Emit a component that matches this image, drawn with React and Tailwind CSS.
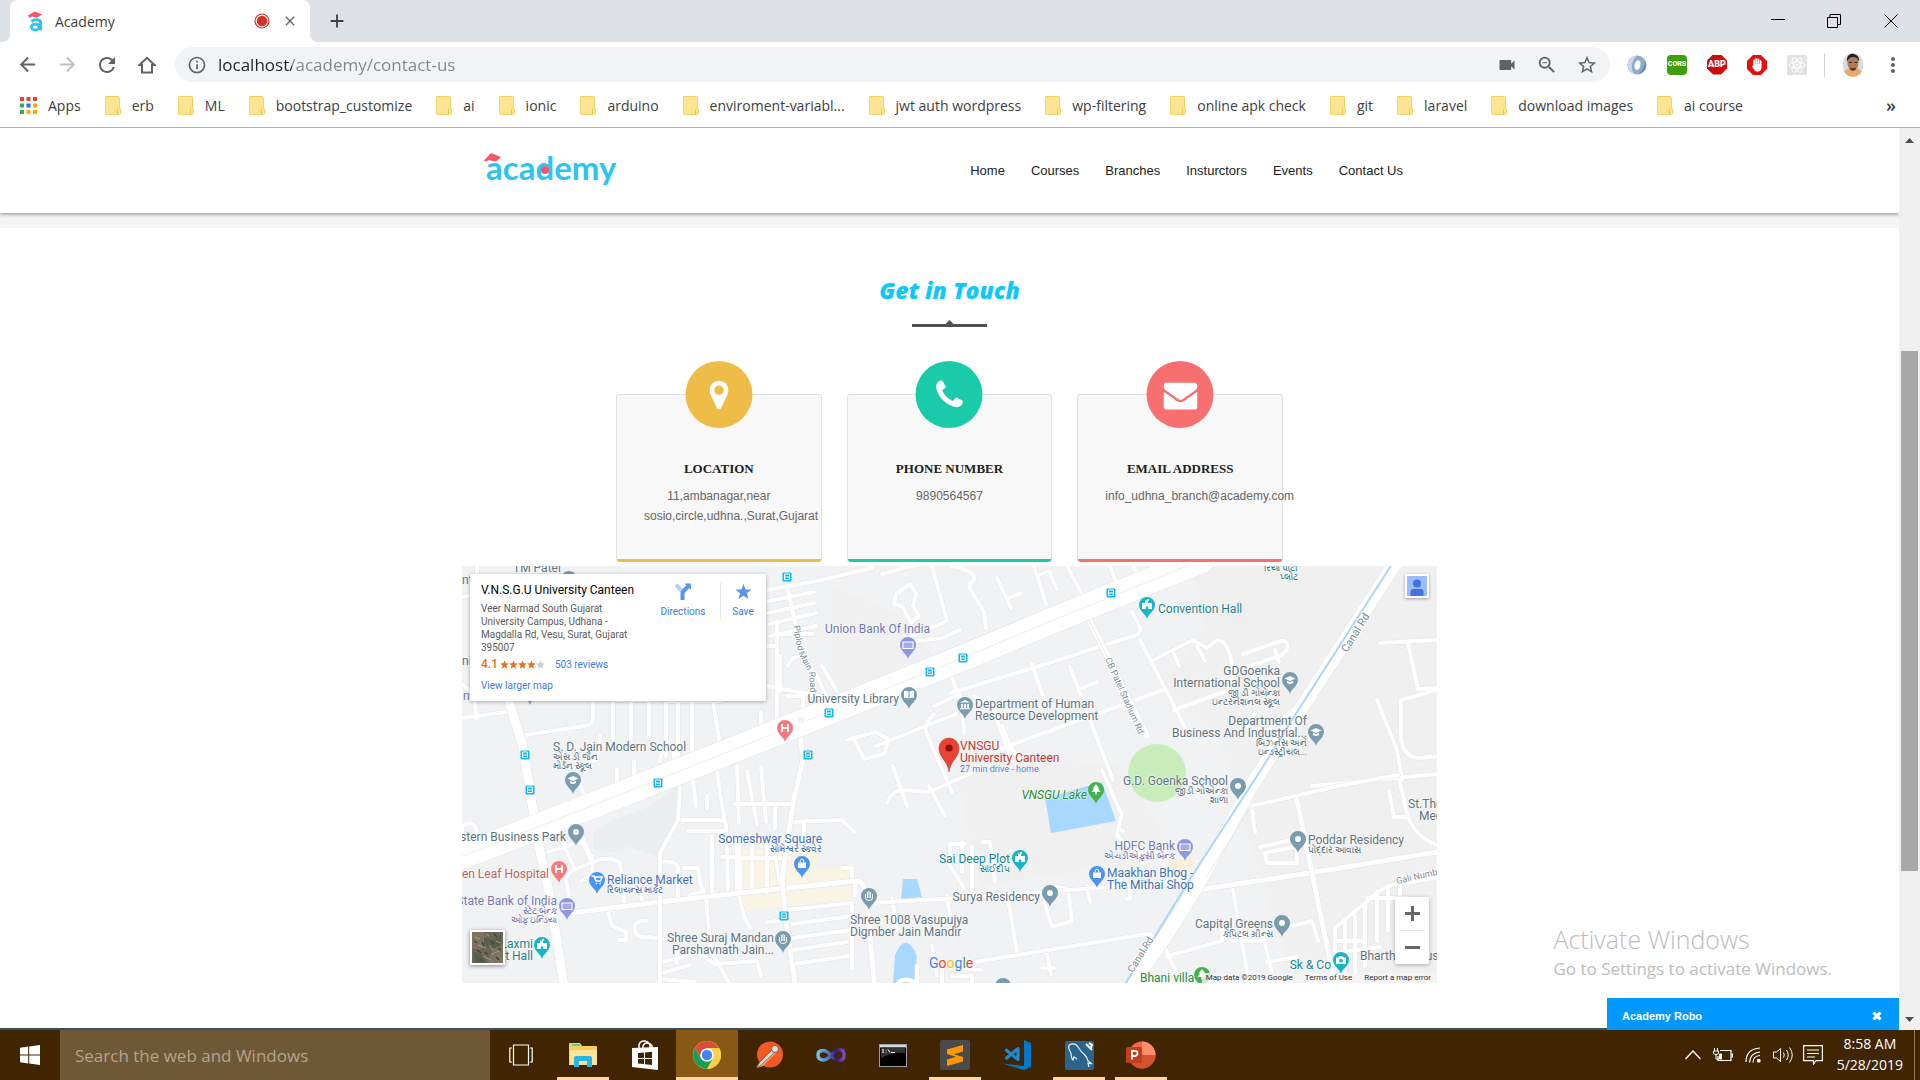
import React from "react";
import { MdArrowBack, MdArrowForward, MdRefresh, MdVideocam, MdOutlineZoomOut, MdStarBorder, MdMoreVert, MdInfoOutline, MdClose, MdAdd } from "react-icons/md";

const bookmarks = [
  "erb", "ML", "bootstrap_customize", "ai", "ionic", "arduino", "enviroment-variabl...",
  "jwt auth wordpress", "wp-filtering", "online apk check", "git", "laravel",
  "download images", "ai course",
];

const navLinks = ["Home", "Courses", "Branches", "Insturctors", "Events", "Contact Us"];

function Folder() {
  return (
    <svg width="16" height="19" viewBox="0 0 16 19" aria-hidden="true">
      <path d="M1 .5h12.5a1 1 0 0 1 1 1V12l1 1v4.5l-1 .9H1.2a.8.8 0 0 1-.8-.8V1.3A.8.8 0 0 1 1 .5z" fill="#ffe591" stroke="#f3d064" />
      <path d="M12.5 18.3v-4.6l1-1.6" fill="none" stroke="#f0c33c" />
    </svg>
  );
}

function Favicon() {
  return (
    <svg width="17" height="21" viewBox="0 0 17 21" aria-hidden="true">
      <path d="M0 4.5 6.5.5 14.5 3.5 9 6.5 4 5.6 1.5 7z" fill="#f4566a" />
      <path d="M3.4 10.6C6 8.3 12.6 7.6 12.6 12v7.2" fill="none" stroke="#2fc4ef" strokeWidth="3" />
      <ellipse cx="7.3" cy="16" rx="4" ry="2.9" fill="none" stroke="#2fc4ef" strokeWidth="2.8" />
    </svg>
  );
}

function Browser() {
  return (
    <header className="shrink-0 font-['Open_Sans',sans-serif]">
      <div className="flex h-[42px] items-center bg-[#dee1e6] pl-[10px] text-[#3c4043]">
        <div className="relative flex h-full w-[300px] items-center rounded-t-lg bg-white pl-[18px] pr-3">
          <span className="absolute bottom-0 -left-2 h-2 w-2 bg-[radial-gradient(circle_at_0_0,transparent_8px,#fff_8px)]" />
          <span className="absolute bottom-0 -right-2 h-2 w-2 bg-[radial-gradient(circle_at_100%_0,transparent_8px,#fff_8px)]" />
          <Favicon />
          <span className="ml-[10px] flex-1 text-[14px]">Academy</span>
          <svg width="16" height="16" viewBox="0 0 16 16" aria-hidden="true">
            <circle cx="8" cy="8" r="7" fill="none" stroke="#d93025" strokeWidth="1.2" />
            <circle cx="8" cy="8" r="5.2" fill="#d93025" />
          </svg>
          <button aria-label="Close tab" className="ml-3"><MdClose size={16} color="#5f6368" /></button>
        </div>
        <button aria-label="New tab" className="ml-4"><MdAdd size={22} color="#3c4043" /></button>
        <div className="ml-auto flex h-full items-center text-black">
          <button aria-label="Minimize" className="flex w-14 justify-center"><svg width="14" height="14"><path d="M0 5.5h14" stroke="currentColor" /></svg></button>
          <button aria-label="Restore" className="flex w-14 justify-center"><svg width="14" height="14" fill="none" stroke="currentColor"><path d="M.5 3.5h10v10H.5zM3 3.5V.5h10.500v10H10.500" /></svg></button>
          <button aria-label="Close window" className="flex w-[58px] justify-center"><svg width="14" height="14"><path d="M.5.5l13 13m0-13-13 13" stroke="currentColor" /></svg></button>
        </div>
      </div>

      <div className="flex h-[45px] items-center bg-white pl-[7px] pr-[7px] text-[#5f6368]">
        <button aria-label="Back" className="flex w-10 justify-center"><MdArrowBack size={23} /></button>
        <button aria-label="Forward" className="flex w-10 justify-center text-[#bdc0c4]"><MdArrowForward size={23} /></button>
        <button aria-label="Reload" className="flex w-10 justify-center"><MdRefresh size={24} /></button>
        <button aria-label="Home page" className="flex w-10 justify-center">
          <svg width="18" height="18" viewBox="0 0 18 18" fill="none" stroke="currentColor" strokeWidth="2"><path d="M1.500 9 9 1.800 16.500 9H14v7.500H4V9z" /></svg>
        </button>
        <div className="ml-2 flex h-[35px] flex-1 items-center rounded-full bg-[#f1f3f4] pl-3">
          <MdInfoOutline size={20} />
          <input
            aria-label="Address"
            readOnly
            value="localhost/academy/contact-us"
            className="ml-[11px] min-w-0 flex-1 bg-[linear-gradient(to_right,#202124_74px,#80868b_74px)] bg-clip-text text-[17px] text-transparent outline-none"
          />
          <button aria-label="Camera" className="flex w-10 justify-center"><MdVideocam size={20} /></button>
          <button aria-label="Zoom" className="flex w-10 justify-center"><MdOutlineZoomOut size={22} /></button>
          <button aria-label="Bookmark" className="mr-[3px] flex w-10 justify-center"><MdStarBorder size={22} /></button>
        </div>
        <button aria-label="Sphere extension" className="ml-[7px] flex w-10 justify-center">
          <svg width="20" height="20" viewBox="0 0 20 20">
            <circle cx="10" cy="10" r="9.500" fill="#8fabcb" />
            <path d="M10 .5a9.500 9.500 0 0 0-2 18.700C3 15 4 6 10 .5z" fill="#c9d8e8" />
            <path d="M12 19a9.500 9.500 0 0 0 6-13c0 5-2 9-6 13z" fill="#5c7fa8" />
            <ellipse cx="10.500" cy="10" rx="3" ry="5" fill="#fff" transform="rotate(12 10 10)" />
          </svg>
        </button>
        <button aria-label="CORS" className="flex w-10 justify-center">
          <span className="flex h-5 w-5 items-center justify-center rounded-sm bg-[#3f9f08] font-['Roboto'] text-[7px] font-black text-white">CORS</span>
        </button>
        <button aria-label="Adblock Plus" className="flex w-10 justify-center">
          <span className="flex h-5 w-5 items-center justify-center bg-[#d00a0a] font-['Roboto'] text-[9px] font-black text-white [clip-path:polygon(30%_0,70%_0,100%_30%,100%_70%,70%_100%,30%_100%,0_70%,0_30%)]">ABP</span>
        </button>
        <button aria-label="AdBlock" className="flex w-10 justify-center">
          <svg width="20" height="20" viewBox="0 0 20 20">
            <path d="M6 0h8l6 6v8l-6 6H6l-6-6V6z" fill="#ee0b0b" />
            <path d="M7 10V5.500M9.200 9.500V4M11.400 9.500V4.300M13.600 10V6" stroke="#fff" strokeWidth="1.800" strokeLinecap="round" />
            <path d="M6.200 9h8.300v3.500c0 2-1.200 4-3.200 4h-1.500C8 16.500 7 14.500 5 11.500c.2-1 1-.8 1.500 0z" fill="#fff" />
          </svg>
        </button>
        <button aria-label="React tools" className="flex w-10 justify-center">
          <svg width="20" height="20" viewBox="0 0 20 20">
            <rect width="20" height="20" rx="1" fill="#e2e2e2" />
            <g fill="none" stroke="#fff" strokeWidth="1">
              <ellipse cx="10" cy="10" rx="8" ry="3.200" />
              <ellipse cx="10" cy="10" rx="8" ry="3.200" transform="rotate(60 10 10)" />
              <ellipse cx="10" cy="10" rx="8" ry="3.200" transform="rotate(120 10 10)" />
            </g>
            <circle cx="10" cy="10" r="1.500" fill="#fff" />
          </svg>
        </button>
        <span className="ml-[7px] mr-4 h-6 w-px bg-[#cfd1d4]" />
        <button aria-label="Profile" className="flex w-6 justify-center">
          <svg width="20" height="24" viewBox="0 0 20 24">
            <clipPath id="face"><rect width="20" height="24" rx="10" /></clipPath>
            <g clipPath="url(#face)">
              <rect width="20" height="24" fill="#d7dcde" />
              <path d="M0 24c0-7 4-9 10-9s10 3 10 9z" fill="#e9a96a" />
              <ellipse cx="10" cy="10" rx="5.500" ry="7.500" fill="#b07a5d" />
              <path d="M4 9C3 2 8 0 11 1s6 3 5 8c-1-4-3-5-6-5S5 6 4 9z" fill="#262021" />
              <path d="M6 9.500h3m2.500 0h3" stroke="#3a2520" />
              <path d="M7 14.500q3 1 6 0l-.5 2.500q-2.500 1.500-5 0z" fill="#5a382c" />
            </g>
          </svg>
        </button>
        <button aria-label="Menu" className="ml-2 flex w-10 justify-center"><MdMoreVert size={24} /></button>
      </div>

      <nav aria-label="Bookmarks" className="flex h-[41px] items-center justify-between border-b border-[#b0b1b3] bg-white pb-1 pl-5 pr-6 text-[14px] text-[#3c4043]">
        <ul className="flex items-center gap-6 whitespace-nowrap">
          <li>
            <a href="#apps" className="flex items-center gap-[11px]">
              <svg width="17" height="17" viewBox="0 0 17 17" aria-hidden="true">
                {["#e94235", "#e94235", "#e94235", "#34a853", "#1a73e8", "#f9ab00", "#34a853", "#f9ab00", "#f9ab00"].map((c, i) => (
                  <rect key={i} x={(i % 3) * 6.5} y={Math.floor(i / 3) * 6.5} width="4" height="4" fill={c} />
                ))}
              </svg>
              Apps
            </a>
          </li>
          {bookmarks.map((b) => (
            <li key={b}>
              <a href="#bookmark" className="flex items-center gap-[11px]"><Folder />{b}</a>
            </li>
          ))}
        </ul>
        <button aria-label="More bookmarks" className="text-[18px] font-semibold">»</button>
      </nav>
    </header>
  );
}

function SiteHeader() {
  return (
    <header className="relative z-10 flex h-[85px] items-center bg-white shadow-[0_1px_4px_rgba(0,0,0,0.45)]">
      <div className="mx-auto flex w-full max-w-[931px] items-center justify-between pr-[12px]">
        <a href="#home" aria-label="academy" className="relative pb-2 pl-[2px] font-['Lato',sans-serif] text-[33px] font-bold leading-[40px] text-[#2fc4ef]">
          academy
          <svg className="absolute left-0 top-0 h-[38px] w-[134px]" viewBox="0 0 134 38" aria-hidden="true">
            <path d="M0 13.500 7 6l10 4-5 4.500-7-1.200L1 14.500z" fill="#f4566a" />
            <circle cx="61" cy="23" r="4" fill="#f4566a" />
          </svg>
        </a>
        <nav aria-label="Site" className="font-['Liberation_Sans',sans-serif] text-[13px] text-[#222]">
          <ul className="flex gap-[26px]">
            {navLinks.map((n) => <li key={n}><a href="#nav">{n}</a></li>)}
          </ul>
        </nav>
      </div>
    </header>
  );
}

const contactCards = [
  {
    title: "LOCATION", text: "11,ambanagar,near sosio,circle,udhna.,Surat,Gujarat",
    circle: "bg-[#eebd48]", edge: "bg-[#eebd48]", box: "0 0 1024 1792", w: 19,
    d: "M768 640q0-106-75-181t-181-75-181 75-75 181 75 181 181 75 181-75 75-181zm256 0q0 109-33 179l-364 774q-16 33-47.5 52t-67.5 19-67.5-19-46.5-52l-365-774q-33-70-33-179 0-212 150-362t362-150 362 150 150 362z",
  },
  {
    title: "PHONE NUMBER", text: "9890564567",
    circle: "bg-[#1acbaa]", edge: "bg-[#1acbaa]", box: "0 0 1792 1792", w: 34,
    d: "M1600 1240q0 27-10 70.5t-21 68.5q-21 50-122 106-94 51-186 51-27 0-52.5-3.5t-57.5-12.5-47.5-14.5-55.5-20.5-49-18q-98-35-175-83-128-79-264.5-215.5t-215.5-264.5q-48-77-83-175-3-9-18-49t-20.5-55.5-14.5-47.5-12.5-57.5-3.5-52.5q0-92 51-186 56-101 106-122 25-11 68.500-21t70.500-10q14 0 21 3 18 6 53 76 11 19 30 54t35 63.500 31 53.500q3 4 17.500 25t21.500 35.500 7 28.500q0 20-28.500 50t-62 55-62 53-28.500 46q0 9 5 22.500t8.500 20.500 14 24 11.500 19q76 137 174 235t235 174q2 1 19 11.500t24 14 20.500 8.500 22.500 5q18 0 46-28.500t53-62 55-62 50-28.500q14 0 28.500 7t35.500 21.500 25 17.500q25 15 53.500 31t63.500 35 54 30q70 35 76 53 3 7 3 21z",
  },
  {
    title: "EMAIL ADDRESS", text: "info_udhna_branch@academy.com",
    circle: "bg-[#f7706f]", edge: "bg-[#f7706f]", box: "0 0 1792 1792", w: 34,
    d: "M1792 710v794q0 66-47 113t-113 47h-1472q-66 0-113-47t-47-113v-794q44 49 101 87 362 246 497 345 57 42 92.500 65.500t94.500 48 110 24.500h2q51 0 110-24.500t94.500-48 92.500-65.500q170-123 498-345 57-39 100-87zm0-294q0 79-49 151t-122 123q-376 261-468 325-10 7-42.500 31t-54 38.500-52 32.500-57.500 27-50 9h-2q-23 0-50-9t-57.500-27-52-32.500-54-38.500-42.500-31q-91-64-262-182.500t-205-142.500q-62-42-117-115.500t-55-136.500q0-78 41.500-130t118.500-52h1472q65 0 112.500 47t47.500 113z",
  },
];

function ContactCard({ card }) {
  return (
    <article className="relative min-h-[168px] overflow-visible rounded-[3px] border border-b-0 border-[#e0e1e2] bg-[#f8f8f8] px-[27px] pt-16 text-center">
      <span className={`absolute -top-[34px] left-1/2 flex h-[67px] w-[67px] -translate-x-1/2 items-center justify-center rounded-full ${card.circle}`}>
        <svg width={card.w} height="34" viewBox={card.box} fill="#fff" aria-hidden="true"><path d={card.d} /></svg>
      </span>
      <h3 className="font-['Liberation_Serif',serif] text-[13px] font-bold leading-5 text-[#222]">{card.title}</h3>
      <p className="mt-[7px] font-['Liberation_Sans',sans-serif] text-[12px] leading-5 text-[#666]">{card.text}</p>
      <span className={`absolute inset-x-0 bottom-0 h-[3px] rounded-b-[3px] ${card.edge}`} />
    </article>
  );
}

const gray = "text-[#5c7481]";
const teal = "text-[#16848e]";
const blue = "text-[#3f6fba]";
const purple = "text-[#7177b4]";

// x is the left edge, or the right edge when right is set; y is the middle of the first line.
const labels = [
  { x: 51, y: 2, c: gray, t: ["TM Patel"] },
  { x: 0, y: 14, c: gray, t: ["nt"] },
  { x: 0, y: 95, c: gray, t: ["ni"] },
  { x: 1, y: 130, c: purple, t: ["n"] },
  { x: 80, y: 132, c: gray, t: [], g: ["Pipl"] },
  { x: 363, y: 63, c: purple, t: ["Union Bank Of India"] },
  { x: 437, y: 133, right: 1, c: gray, t: ["University Library"] },
  { x: 91, y: 181, c: gray, t: ["S. D. Jain Modern School"], g: ["એસ ડી જૈન", "મોર્ડન સ્કૂલ"] },
  { x: 104, y: 271, right: 1, c: gray, t: ["stern Business Park"] },
  { x: 87, y: 308, right: 1, c: "text-[#bd6164]", t: ["en Leaf Hospital"] },
  { x: 145, y: 314, c: blue, t: ["Reliance Market"], g: ["રિલાયન્સ માર્કેટ"] },
  { x: 95, y: 335, right: 1, c: purple, t: ["State Bank of India"], g: ["સ્ટેટ બેન્ક", "ઓફ ઇન્ડિયા"] },
  { x: 71, y: 378, right: 1, c: teal, t: ["Laxmi", "Event Hall"] },
  { x: 360, y: 273, right: 1, c: blue, t: ["Someshwar Square"], g: ["સોમેશ્વર સ્ક્વેર"] },
  { x: 312, y: 372, right: 1, c: gray, t: ["Shree Suraj Mandan", "Parshavnath Jain..."] },
  { x: 388, y: 354, c: gray, t: ["Shree 1008 Vasupujya", "Digmber Jain Mandir"] },
  { x: 548, y: 293, right: 1, c: teal, t: ["Sai Deep Plot"], g: ["સાંઈદીપ"] },
  { x: 578, y: 331, right: 1, c: gray, t: ["Surya Residency"] },
  { x: 513, y: 138, c: gray, t: ["Department of Human", "Resource Development"] },
  { x: 625, y: 229, right: 1, c: "text-[#2a8a35] italic", t: ["VNSGU Lake"] },
  { x: 696, y: 43, c: teal, t: ["Convention Hall"] },
  { x: 836, y: 4, right: 1, c: teal, t: [], g: ["રિયા પાર્ટી", "પ્લોટ"] },
  { x: 818, y: 105, right: 1, c: gray, t: ["GDGoenka", "International School"], g: ["જી ડી ગોયેન્કા", "ઇન્ટરનેશનલ સ્કૂલ"] },
  { x: 845, y: 155, right: 1, c: gray, t: ["Department Of", "Business And Industrial..."], g: ["બિઝનેસ અને", "ઇન્ડસ્ટ્રીયલ..."] },
  { x: 766, y: 215, right: 1, c: gray, t: ["G.D. Goenka School"], g: ["જીડી ગોએન્કા", "શાળા"] },
  { x: 713, y: 280, right: 1, c: purple, t: ["HDFC Bank"], g: ["એચડીએફસી બેન્ક"] },
  { x: 645, y: 307, c: blue, t: ["Maakhan Bhog -", "The Mithai Shop"] },
  { x: 846, y: 274, c: gray, t: ["Poddar Residency"], g: ["પોદ્દાર આવાસ"] },
  { x: 811, y: 358, right: 1, c: gray, t: ["Capital Greens"], g: ["કેપિટલ ગ્રીન્સ"] },
  { x: 869, y: 399, right: 1, c: teal, t: ["Sk & Co"] },
  { x: 678, y: 412, c: "text-[#2a8a35]", t: ["Bhani villa"] },
  { x: 898, y: 390, c: gray, t: ["Bharthana Bus"] },
  { x: 946, y: 238, c: gray, t: ["St.Tho"] },
  { x: 957, y: 250, c: gray, t: ["Med"] },
];

const slate = "#7a9cb0";
const cyan = "#17b5c8";
const azure = "#4a94f5";
const violet = "#8f97e2";
const coral = "#f6797d";
const leaf = "#47b04c";

// x and y give the tip of the pin.
const pins = [
  [446, 93, violet, "card"], [447, 143, slate, "book"], [111, 228, slate, "cap"], [323, 176, coral, "h"],
  [97, 317, coral, "h"], [114, 280, slate, "dot"], [135, 328, azure, "cart"], [105, 354, violet, "card"],
  [80, 393, cyan, "hall"], [340, 312, azure, "bag"], [321, 387, slate, "hand"], [407, 344, slate, "hand"],
  [558, 306, cyan, "hall"], [588, 341, slate, "dot"], [503, 153, slate, "bank"], [634, 238, leaf, "tree"],
  [685, 53, cyan, "hall"], [828, 128, slate, "cap"], [854, 180, slate, "cap"], [776, 234, slate, "dot"],
  [723, 295, violet, "card"], [635, 322, azure, "bag"], [836, 287, slate, "dot"], [820, 371, slate, "dot"],
  [879, 408, cyan, "camera"], [740, 423, leaf, "tree"], [107, 27, slate, "dot"], [68, 139, violet, "card"],
  [541, 434, slate, "dot"],
];

const glyphs = {
  dot: <circle r="3" fill="#fff" />,
  cap: <path d="M-5.500-1.500 0-4 5.500-1.500 0 1zM-3 .8V3Q0 5 3 3V.8L0 2.200z" fill="#fff" />,
  cart: <path d="M-5-4h2l2 5h4.500l1.500-4H-2M-.500 3.500h.1M3 3.500h.1" fill="none" stroke="#fff" strokeWidth="1.600" strokeLinecap="round" />,
  card: <path d="M-5-3H5v6.500H-5z" fill="#fff" fillOpacity=".2" stroke="#fff" strokeWidth="1.100" />,
  book: <path d="M-5-4q3-.5 4.500.5v7q-2-1-4.500-.5zM5-4Q2-4.500.5-3.500v7q2-1 4.500-.5z" fill="#fff" />,
  h: <path d="M-3-4v8M3-4v8M-3 0h6" stroke="#fff" strokeWidth="1.800" fill="none" />,
  bag: <><path d="M-4-1.500h8V4h-8z" fill="#fff" /><path d="M-2-1.500q0-3.500 2-3.500t2 3.500" fill="none" stroke="#fff" /></>,
  bank: <path d="M-5-2.500 0-5l5 2.500zM-4-1h1.800v4H-4zM-1-1H1v4h-2zM2.200-1H4v4H2.200zM-5 3.300H5v1H-5z" fill="#fff" />,
  hall: <path d="M-5 4v-6h3v-2.500H0V-6h2v2H1v2h4v6H1.200V1.500h-2.400V4z" fill="#fff" />,
  hand: <path d="M-3.500-2v4Q-3.500 4.500 0 4.500T3.500 2v-4M-1.500 2v-6M0 2v-7M1.500 2v-6" fill="none" stroke="#fff" strokeWidth="1" />,
  tree: <path d="M0-6 3-2H2l2.500 4H.7v2.500H-.7V2h-3.800L-2-2h-1z" fill="#fff" />,
  camera: <><path d="M-5-2.500h2.500L-1.500-4h3l1 1.500H5V4H-5z" fill="#fff" /><circle cy=".6" r="1.900" fill={cyan} /></>,
};

const busStops = [[325, 11], [468, 106], [367, 147], [346, 189], [63, 189], [68, 224], [196, 217], [322, 350], [649, 27], [501, 92]];

const lanes = [
  "M0 31 40 24M15 0v30M0 152 51 145M63 169l60-9q8-1 8-6v-24M0 118l12 10 2 24",
  "M151 120v53M169 120v52M187 120v52M150 134h46M204 135h55M216 135v62M230 135v55M251 135l8 50M204 120v70M299 146v16M315 55v97M300 119l62 12M325 130h16v20",
  "M300 25l55-10 55-13M302 36l50-10M306 47l46-10M308 58l46-11M308 70l46-10M325 20l10 45M300 80h15v-12h35M318 90v35M326 100q6-14 16-8l14 20 8 18M360 100l15 25",
  "M434 28l14-10 6 10-3 12 6 10-8 7-9-17-8-2zM470 0l15 55-40 18M420 8 480-8M455 75l25-3 18-8",
  "M385 174l28-8 14 7-5 15-20 5-10-20M414 180l80-32M472 148q-10 10-8 18l26 60M472 140l26-12 4 38",
  "M425 237q5-12 14-13l28 2 45-20M431 200l14 40M467 220l16 30M130 290q0 0 0 0",
  "M155 228v-25M172 220v-25M115 200l20-6 3-24M125 235l-12-27M198 195q3-18 14-15v40M230 205l4 35M245 230v12M255 205l7 47M275 200l2 57M285 205l10 53M299 200l5 56M313 240v22M273 238h57",
  "M100 275l12 26M118 270l13 30q0 10-12 15M104 315q0-8 10-12l25-10q18-2 20 8l3 35M104 312l3 20M115 258l16 38M86 286l36-11M0 282v-22q10-6 14 2l4 20M30 270v14",
  "M216 254h40q8 0 8 5v6h-38M198 296q16-2 18 6v30M222 302h14l2 15 4 8-14 4M250 270v60M265 280l1 50M260 291h15M275 268v60M180 334l-5-20M244 332l5 53 18 32M238 388l15 10 42-3 4 15M200 396l26-6M200 407l28-8M198 413l35 3M146 346l4 14 14 6v8h-6M185 355q-14-2-12 10 2 8 15 6l13 2M215 375v22",
  "M277 280l2 46M290 275v48M305 275v52M313 290l5 28M277 292h50M277 330l5 20 6 12M330 256l50-2 12 12M342 258v16M393 316v14M325 344l65-7v66M330 358l60-8M330 372l60-8M330 384l55-8M332 398l55-8M305 356l20-2M380 302h10v12M430 332l5 32M485 330l3 20M455 400v17q-20-10-22 10M470 380l5 30",
  "M490 0q25 5 22 14-8 5-2 12l12 20 2 16M535 12l14 30M547 32l12-5M572 0l12 38M575 10l12-5 8 18M605 0l15 28M648 0l6 16M670-2l5 10M488 85l95-40M498 135l-10-30M550 195l-20-55-18-10",
  "M488 127l80-24 100-32q12-2 10-10l-8-15M570 98l12 35M608 101l43 113M620 122l15-6M535 184l166-60M678 74l45 87M691 94l40-20 14 8 10-8q12 0 16 30l-4 20-55 20M712 88l5 12M735 80l8 15M540 160l8 20 10 14",
  "M781 88l38-13q8-1 6 8l-5 6-35 12M813 84l4 12M793 147l-8 12 5 10q20-3 45-30",
  "M918 77l57-3M946 77l10 46 19-1M915 134l20 50 5 30M975 124l-36 10v38q2 20 20 20l16-2M850 220l125-12M785 241l96-22 55-10M936 209l10 42q8 20 29 28M927 225l5 26h12M790 243l3 24M798 281l36-8M803 287l32-7v17h-30z",
  "M488 280v20l14 22M500 276v30M510 280v44M520 276h8l5 40M488 278h15M545 326l10 61M590 320l16 3 4 32-20 6-8-25zM625 320l3 16M668 318v15h-4M640 204l20 45-4 14M661 265q-8-4-5 6l10 8 14 10v20",
  "M585 388l4 20M580 402h12M480 404v13M490 410h20v12M498 402l20 2",
  "M771 324l18 105M701 377l20 45M705 390l55-15v-20M800 366l10 40M770 375h30M830 360l20-5 6 20M805 396l30-5",
  "M873 417v-55l30-25q20-20 40-20l32-5M883 357v60M893 350v58M903 340v60M915 325v50M926 320v45M938 318v30M873 375h30M873 387l45-6M905 332h40",
];

function Road({ d, w }) {
  return (
    <>
      <path d={d} strokeWidth={w + 1} stroke="#e2e4e7" />
      <path d={d} strokeWidth={w} stroke="#fff" />
    </>
  );
}

function MapDrawing() {
  const highway = "M-10 294 76 261 200 212 339 157 498 93 621 42 740-6";
  const canalRoad = "M938-10 831 155 790 219 735 320 701 374 665 425";
  return (
    <svg className="block h-full w-full" viewBox="0 0 975 417" preserveAspectRatio="xMinYMin slice" role="img" aria-label="Street map around V.N.S.G.U University Canteen">
      <rect width="975" height="417" fill="#f1f2f4" />
      <path d="M730 0h245v417H830L760 180 700 120 745 60zM488 180l170 20 60 90-200 30zM370 20l70 30 40 50-110 30z" fill="#f0f0f0" />
      <path d="M151 254 186 241v26l-28 20-27-3v-17zM186 241l30-20v30l-20 40-28-10z" fill="#ebeeef" />
      <path d="M278 284h43l34-3v23l36-5 2 17-115 11zM280 330l115-10 1 13-115 12z" fill="#f9f4e4" />
      <path d="M708 294l25-2-8 18-17 2z" fill="#fdeeda" />
      <circle cx="695" cy="207" r="29" fill="#c8edbb" />
      <path d="M583 232l57-16 14 39-65 12zM441 313h14l5 18-21 2zM431 417l2-28q6-14 12-12t10 14l-3 26z" fill="#a9d8ff" />
      <g fill="none" strokeLinejoin="round" strokeLinecap="round">
        {lanes.map((d) => <path key={"c" + d} d={d} stroke="#e3e5e8" strokeWidth="5" />)}
        {lanes.map((d) => <path key={d} d={d} stroke="#fff" strokeWidth="4" />)}
        <Road d="M108 347 198 336l80-9 115-12q8 0 10 8l2 16 8 85" w={5} />
        <Road d="M198 425V287l18-33 2-34-3-20" w={4} />
        <Road d="M338 167l3 27-10 43-11 77 4 40 10 70" w={5} />
        <Road d="M410 337l88-5 150-11 87-7" w={4} />
        <Road d="M735 324 848 307l127-21" w={5} />
        <Road d="M835 234l36 175" w={5} />
        <Road d="M500 398l185-30q6 0 16 9" w={4} />
        <Road d="M625 49l60 121" w={6} />
        <path d="M627 54l57 114" stroke="#e9ebed" strokeWidth="1" />
        <Road d="M785 241l96-22 55-10" w={4} />
        <Road d="M35 95 50 145 61 181 76 275 88 331 102 420" w={9} />
        <Road d={highway} w={26} />
        <path d={highway} stroke="#ebedef" strokeWidth="1" />
        <circle cx="339" cy="154" r="5" fill="#f1f2f4" stroke="#fff" strokeWidth="3" />
        <Road d={canalRoad} w={14} />
        <path d="M790 239 745 310" stroke="#e6e8ea" />
        <path d="M932-5 828 157 797 207 730 310 695 367 662 420" stroke="#a9d6fb" strokeWidth="2" />
      </g>
      <g fontFamily="Roboto, sans-serif" fill="#7b8b95" fontSize="9" textAnchor="middle" dominantBaseline="middle" stroke="#fff" strokeWidth="2" paintOrder="stroke">
        <text transform="translate(894 67) rotate(-58)" fontSize="11">Canal Rd</text>
        <text transform="translate(679 389) rotate(-58)" fontSize="10">Canal Rd</text>
        <text transform="translate(662 130) rotate(66)">CB Patel Stadium Rd</text>
        <text transform="translate(336 72) rotate(80)">Piplod</text>
        <text transform="translate(343 95) rotate(62)">Main</text>
        <text transform="translate(350 116) rotate(85)">Road</text>
        <text transform="translate(955 311) rotate(-13)">Gali Numb</text>
      </g>
      {busStops.map(([x, y]) => (
        <g key={x + "-" + y} transform={`translate(${x} ${y})`}>
          <rect x="-4.500" y="-4.500" width="9" height="9" rx="1" fill="#12b5f5" />
          <path d="M-2.500-3h5v5.500h-5z" fill="none" stroke="#fff" strokeWidth="1" />
          <path d="M-2.500 0h5" stroke="#fff" />
        </g>
      ))}
      {pins.map(([x, y, color, kind]) => (
        <g key={x + "-" + y} transform={`translate(${x} ${y})`}>
          <path d="M0 0C-1-5-8-8-8-14A8 8 0 1 1 8-14C8-8 1-5 0 0Z" fill={color} />
          <g transform="translate(0 -14)">{glyphs[kind]}</g>
        </g>
      ))}
      <g transform="translate(487 206)">
        <path d="M0 0C-1-11-10-14-10-24A10 10 0 1 1 10-24C10-14 1-11 0 0Z" fill="#ea4335" stroke="#c5362b" strokeWidth=".6" />
        <circle cy="-24" r="3.600" fill="#8f0f0a" />
      </g>
    </svg>
  );
}

function Stars() {
  return (
    <span className="flex leading-none" role="img" aria-label="4.1 stars">
      {[0, 1, 2, 3, 4].map((i) => (
        <svg key={i} width="9" height="9" viewBox="0 0 24 24" fill={i < 4 ? "#e7711b" : "#ccc"}>
          <path d="M12 1l3.200 7.800 8.300.6-6.400 5.400 2 8.200L12 18.500 4.900 23l2-8.200L.5 9.400l8.300-.6z" />
        </svg>
      ))}
    </span>
  );
}

function PlaceCard() {
  return (
    <div className="absolute left-2 top-2 flex h-[127px] w-[296px] rounded-[2px] bg-white pl-[11px] pt-[9px] text-[10px] leading-[13px] text-[#5b5b5b] shadow-[0_1px_4px_rgba(0,0,0,0.3)]">
      <div className="w-[154px]">
        <h4 className="whitespace-nowrap text-[12px] font-normal leading-[14px] text-black">V.N.S.G.U University Canteen</h4>
        <p className="mt-[5px] w-[150px]">Veer Narmad South Gujarat University Campus, Udhana - Magdalla Rd, Vesu, Surat, Gujarat 395007</p>
        <div className="mt-1 flex items-center gap-[2px]">
          <span className="text-[12px] font-medium text-[#e7711b]">4.1</span>
          <Stars />
          <a href="#reviews" className="ml-2 whitespace-nowrap text-[#3a7bea]">503 reviews</a>
        </div>
        <a href="#larger" className="mt-2 block text-[#3a7bea]">View larger map</a>
      </div>
      <button className="ml-5 flex h-10 w-14 flex-col items-center text-[#3a7bea]">
        <svg width="17" height="17" viewBox="0 0 17 17" aria-hidden="true">
          <path d="M1 1.500 7.500 9" stroke="#b4d0f7" strokeWidth="4" />
          <path d="M7.500 17V11q0-2 2-4l3.500-3.500" fill="none" stroke="#5b95ec" strokeWidth="4" />
          <path d="M9.500.5H16V7z" fill="#5b95ec" />
        </svg>
        <span className="mt-[5px]">Directions</span>
      </button>
      <span className="ml-[9px] h-9 w-px bg-[#e8e8e8]" />
      <button className="flex h-10 w-11 flex-col items-center text-[#3a7bea]">
        <svg width="17" height="17" viewBox="0 0 24 24" fill="#5b95ec" aria-hidden="true"><path d="M12 1l3 8 8.500.3-6.700 5.200 2.400 8.200L12 18l-7.200 4.700 2.400-8.200L.5 9.300 9 9z" /></svg>
        <span className="mt-[5px]">Save</span>
      </button>
    </div>
  );
}

const googleLetters = [
  ["G", "text-[#4285f4]"], ["o", "text-[#ea4335]"], ["o", "text-[#fbbc05]"], ["g", "text-[#4285f4]"], ["l", "text-[#34a853]"], ["e", "text-[#ea4335]"],
];

function CampusMap() {
  return (
    <div className="relative mt-1 h-[417px] w-full max-w-[975px] overflow-hidden font-['Roboto',sans-serif]">
      <MapDrawing />
      {labels.map((l, i) => (
        <div
          key={i}
          className={`absolute whitespace-nowrap text-[12px] leading-[12px] [text-shadow:0_0_2px_#fff,0_0_2px_#fff] ${l.c} ${l.right ? "-translate-x-full text-right" : ""}`}
          style={{ left: l.x, top: l.y - 6 }}
        >
          {l.t.map((s) => <div key={s}>{s}</div>)}
          {l.g && l.g.map((s) => <div key={s} className="text-[9px] leading-[9px]">{s}</div>)}
        </div>
      ))}
      <div className="absolute left-[498px] top-[174px] whitespace-nowrap text-[12px] leading-[12px] text-[#c8342b] [text-shadow:0_0_2px_#fff]">
        <div>VNSGU</div>
        <div>University Canteen</div>
        <div className="text-[9px] leading-[10px] text-[#4a86e8]">27 min drive - home</div>
      </div>
      <div className="absolute left-[467px] top-[388px] text-[14px] leading-[18px] [text-shadow:0_0_2px_#fff]" aria-label="Google">
        {googleLetters.map(([ch, c], i) => <span key={i} className={c}>{ch}</span>)}
      </div>
      <PlaceCard />
      <button aria-label="Account" className="absolute right-2 top-2 flex h-6 w-6 items-center justify-center bg-white shadow-[0_1px_3px_rgba(0,0,0,0.35)]">
        <svg width="20" height="20" viewBox="0 0 20 20"><rect width="20" height="20" fill="#9dbdfa" /><circle cx="10" cy="7.500" r="4" fill="#3f73dd" /><path d="M3.500 20v-4q0-3 3-3h7q3 0 3 3v4z" fill="#3f73dd" /></svg>
      </button>
      <button aria-label="Satellite view" className="absolute bottom-[18px] left-2 h-[35px] w-[35px] border-2 border-white shadow-[0_1px_4px_rgba(0,0,0,0.45)]">
        <svg className="h-full w-full" viewBox="0 0 31 31">
          <rect width="31" height="31" fill="#6b6754" />
          <path d="M0 0h12l4 8-7 9H0zM20 18l11-6v19H16z" fill="#7d735e" />
          <path d="M12 5l9 3 8-5v10l-9 4-8-5zM2 20l8 3 5 8H3z" fill="#54604a" />
          <path d="M3 5l5 2M14 2l3 2M6 13l8 3M20 22l7-3M11 24l8 4M24 9l5 2M17 13l4 5" stroke="#a59b85" strokeWidth="1" />
          <path d="M2 9l3 2M10 10l2 4M19 9l3 3M26 16l3 2M5 18l4 3M13 20l3 3M24 25l3 3M22 2l3 3M8 27l3 2" stroke="#3f4536" strokeWidth="1.500" />
        </svg>
      </button>
      <div className="absolute bottom-[19px] right-2 flex w-[34px] flex-col rounded-[2px] bg-white text-[#666] shadow-[0_1px_4px_rgba(0,0,0,0.3)]">
        <button aria-label="Zoom in" className="flex h-[33px] items-center justify-center"><svg width="15" height="15"><path d="M7.500 0v15M0 7.500h15" stroke="currentColor" strokeWidth="3" /></svg></button>
        <span className="mx-[5px] h-px bg-[#e6e6e6]" />
        <button aria-label="Zoom out" className="flex h-[33px] items-center justify-center"><svg width="15" height="15"><path d="M0 7.500h15" stroke="currentColor" strokeWidth="3" /></svg></button>
      </div>
      <div className="absolute bottom-0 right-0 flex h-[10px] items-center gap-3 bg-[#f5f5f5]/80 pl-1 pr-[6px] text-[8px] leading-none text-[#333]">
        <span>Map data ©2019 Google</span>
        <a href="#terms">Terms of Use</a>
        <a href="#report">Report a map error</a>
      </div>
    </div>
  );
}

function Page() {
  return (
    <div className="relative flex min-h-0 flex-1 bg-white">
      <main className="flex min-w-0 flex-1 flex-col overflow-hidden">
        <SiteHeader />
        <div className="h-[15px] shrink-0 bg-[#f5f5f5]" />
        <section className="flex shrink-0 flex-col items-center pb-[45px] pt-[46px]">
          <h2 className="font-['Open_Sans',sans-serif] text-[23px] font-extrabold italic leading-8 text-[#0cc8fb]">Get in Touch</h2>
          <svg className="mt-[14px]" width="75" height="7" viewBox="0 0 75 7" aria-hidden="true"><path d="M0 4h33.500l4-4 4 4H75v3H0z" fill="#505050" /></svg>
          <div className="mt-[67px] grid w-full max-w-[667px] grid-cols-3 gap-[25px]">
            {contactCards.map((c) => <ContactCard key={c.title} card={c} />)}
          </div>
          <CampusMap />
        </section>
        <footer className="flex-1 bg-[#3f4f5c]" />
      </main>
      <div aria-hidden="true" className="flex w-[21px] shrink-0 flex-col items-center bg-[#f0f0f0] pb-2 pt-[10px]">
        <svg width="9" height="5"><path d="M0 5 4.500 0 9 5z" fill="#505050" /></svg>
        <span className="mt-[208px] w-[17px] flex-1 bg-[#a8a8a8]" />
        <svg className="mt-[146px]" width="9" height="5"><path d="M0 0l4.500 5L9 0z" fill="#505050" /></svg>
      </div>
      <div className="absolute bottom-[49px] right-[88px] font-['Open_Sans',sans-serif] text-[#bdbdbd]">
        <p className="text-[25px] font-light leading-9">Activate Windows</p>
        <p className="text-[17px] leading-6">Go to Settings to activate Windows.</p>
      </div>
      <div className="absolute bottom-0 right-[21px] flex h-8 w-[292px] items-center justify-between bg-[#0099ff] pl-[15px] pr-[17px] pt-1 font-['Liberation_Sans',sans-serif] text-[11px] font-bold text-white">
        <span>Academy Robo</span>
        <button aria-label="Close chat"><svg width="10" height="10"><path d="M1.500 1.500l7 7m0-7-7 7" stroke="#fff" strokeWidth="3" /></svg></button>
      </div>
    </div>
  );
}

const taskIcons = [
  { name: "Task View", el: <svg width="24" height="22" viewBox="0 0 24 22" fill="none" stroke="#fff" strokeWidth="1.200"><path d="M4.500 1h15v20h-15zM3 4H.8v14H3M21 4h2.200v14H21" /></svg> },
  { name: "File Explorer", line: 1, el: <svg width="28" height="24" viewBox="0 0 28 24"><path d="M0 1q0-1 1-1h10l2 3h14q1 0 1 1v18H0z" fill="#f7cf5e" /><path d="M1 7h27v15H1z" fill="#ffe497" /><path d="M3 1h8v2H3z" fill="#5ec7a8" /><path d="M5 24V15q0-2 2-2h14q2 0 2 2v9h-5v-6h-8v6z" fill="#2ab5ea" /></svg> },
  { name: "Store", el: <svg width="28" height="31" viewBox="0 0 28 31"><path d="M1 8l26-1v23L1 27z" fill="#fff" /><path d="M8 8V5q1-4 5-4t6 4v3M12 8V6q1-3 4-3t5 3v2" fill="none" stroke="#fff" strokeWidth="1.500" /><path d="M7 13l6-.5V18H7zM14 12.400l7-.6V18h-7zM7 19h6v5l-6-.6zM14 19h7v6l-7-.8z" fill="#402500" /></svg> },
  { name: "Chrome", active: 1, line: 1, el: <svg width="28" height="28" viewBox="0 0 28 28"><circle cx="14" cy="14" r="14" fill="#fdd04a" /><path d="M1.900 7A14 14 0 0 1 26.100 7H14L8 17.500z" fill="#dc4b3e" /><path d="M1.900 7A14 14 0 0 0 14 28l6-10.500H8z" fill="#1c9e5b" /><path d="M14 28l6.100-10.500L14 7h12.100A14 14 0 0 1 14 28z" fill="#fdd04a" /><circle cx="14" cy="14" r="6.800" fill="#fff" /><circle cx="14" cy="14" r="5.200" fill="#4285f4" /></svg> },
  { name: "Postman", el: <svg width="28" height="28" viewBox="0 0 28 28"><circle cx="15" cy="13.500" r="13" fill="#f15a24" /><path d="M19 9 6 22l-4 5 6-2L21 12z" fill="#f7a35e" /><path d="M18 8 5 21l-4 6 5-3L20 11z" fill="#ddd" stroke="#6b5346" strokeWidth=".7" /><circle cx="20" cy="8" r="3.500" fill="#ddd" stroke="#6b5346" strokeWidth=".8" /></svg> },
  { name: "Visual Studio", el: <svg width="30" height="16" viewBox="0 0 30 16"><defs><linearGradient id="loop"><stop offset="0" stopColor="#7cc0e0" /><stop offset=".45" stopColor="#4a6ab8" /><stop offset=".7" stopColor="#3a1578" /><stop offset="1" stopColor="#7a4fb8" /></linearGradient></defs><path d="M15 8.500q-4-5-8-5-5 0-5 4.500t5 5q4 0 8-4.500t8-6q5 0 5 5.500t-5 5.500q-4 0-8-5" fill="none" stroke="url(#loop)" strokeWidth="3.500" /></svg> },
  { name: "Command Prompt", el: <svg width="28" height="23" viewBox="0 0 28 23"><rect x=".5" y=".5" width="27" height="22" fill="#000" stroke="#9aa0a6" /><path d="M1 1h26v2.500H1z" fill="#d5d9dd" /><path d="M2 14Q14 8 26 9V3.500H2z" fill="#333" /><path d="M3 6h2M3 8h2M7 6v.5M7 8v.5M9 5.500l2 3M12 8.500h4" stroke="#fff" /></svg> },
  { name: "Sublime Text", line: 1, el: <svg width="30" height="30" viewBox="0 0 30 30"><rect width="30" height="30" rx="2" fill="#4a4a4a" /><path d="M7 9.500 23 5v6.500l-9 2.800 9 2.700v4.500L7 26v-6.500l9-2.800-9-2.700z" fill="#ff9800" /></svg> },
  { name: "VS Code", el: <svg width="30" height="30" viewBox="0 0 30 30"><path d="M22 0l7 3v24l-7 3L0 23.500l22 2.500z" fill="#0179cb" /><path d="M3.500 9.500 16 19.500V8.500L3.500 19" fill="none" stroke="#1b8ad6" strokeWidth="3.200" strokeLinejoin="round" /></svg> },
  { name: "MySQL Workbench", line: 1, el: <svg width="29" height="29" viewBox="0 0 29 29"><rect width="29" height="29" rx="2" fill="#2c658c" /><path d="M4 4q6-3 9 2 3 5 6 7 3 3 4 7l4 3-4-1 1 4M4 4q-1 4 2 8 0 5 2 7l1-3 3 2" fill="none" stroke="#e6eff5" strokeWidth="1.200" /><path d="M21 3l6 6M24 2l3 2-1 3" stroke="#fff" strokeWidth="2" fill="none" /></svg> },
  { name: "PowerPoint", line: 1, el: <svg width="30" height="28" viewBox="0 0 30 28"><circle cx="16" cy="14" r="13.500" fill="#ed6c47" /><path d="M16 .5A13.500 13.500 0 0 1 29.500 14H16z" fill="#ff8f6b" /><path d="M2.500 14h27a13.500 13.500 0 0 1-27 0z" fill="#d35230" /><rect y="6" width="16" height="16" rx="1.500" fill="#c43e1c" /><path d="M6 18.500V9.800h3q2.500 0 2.500 2.500T9 15H6" fill="none" stroke="#fff" strokeWidth="1.800" /></svg> },
];

function Taskbar() {
  return (
    <footer className="flex h-[50px] shrink-0 items-center bg-[#402500] font-['Open_Sans',sans-serif] text-white">
      <button aria-label="Start" className="flex h-full w-[60px] items-center justify-center">
        <svg width="20" height="20" viewBox="0 0 20 20" fill="#fff"><path d="M0 2.800 8.200 1.600v8H0zM9.200 1.500 20 0v9.600H9.200zM0 10.500h8.200v8L0 17.300zM9.200 10.500H20V20L9.200 18.500z" /></svg>
      </button>
      <input aria-label="Search the web and Windows" placeholder="Search the web and Windows" className="h-full w-[430px] bg-[#6f5835] px-[15px] text-[17px] outline-none placeholder:text-[#b3a591]" />
      {taskIcons.map((t) => (
        <button key={t.name} aria-label={t.name} className={`relative flex h-full w-[62px] items-center justify-center ${t.active ? "bg-[#885815]" : ""}`}>
          {t.el}
          {t.line && <span className={`absolute bottom-0 h-[3px] bg-[#ffd6a0] ${t.active ? "inset-x-0" : "inset-x-[5px]"}`} />}
        </button>
      ))}
      <div className="ml-auto flex h-full items-center">
        <button aria-label="Hidden icons" className="mr-3"><svg width="16" height="10" fill="none" stroke="#fff" strokeWidth="1.300"><path d="M.5 9 8 1l7.500 8" /></svg></button>
        <button aria-label="Battery" className="mr-3"><svg width="20" height="14" viewBox="0 0 20 14" fill="none" stroke="#fff"><path d="M7 2.500h11v10H5V8" strokeWidth="1.200" /><path d="M19.300 5.500v4" strokeWidth="1.400" /><path d="M6.500 6h2v5h-2z" fill="#fff" /><path d="M1.500 0v3M4.500 0v3M.5 3h5v2q0 1.500-2.500 1.500T.5 5zM3 6v5h3" /></svg></button>
        <button aria-label="Network" className="mr-3"><svg width="16" height="16" viewBox="0 0 16 16" fill="none" stroke="#fff"><path d="M1 15Q1 2 15 1M4.500 15.500Q5 6 15 5M8 15.500Q8 9 15 8.500" strokeWidth="1.200" /><path d="M12.500 12.500H15V15h-2.500z" fill="#fff" /></svg></button>
        <button aria-label="Volume" className="mr-[10px]"><svg width="20" height="18" viewBox="0 0 20 18" fill="none" stroke="#fff"><path d="M.5 6v6h3l4 3.500v-13L3.500 6z" /><path d="M10.500 6.500q1.500 2.500 0 5M13.500 4q3.500 5 0 10M16.500 1.500q5.500 7.500 0 15" /></svg></button>
        <button aria-label="Notifications" className="mr-[14px]"><svg width="20" height="20" viewBox="0 0 20 20" fill="none" stroke="#fff"><path d="M.6.600h18.800v15H13L10.500 19v-3.400H.6z" strokeWidth="1.200" /><path d="M4 5h12M4 8.500h12M4 12h8" strokeWidth="1.200" /></svg></button>
        <time className="mr-[11px] pb-[2px] text-center text-[14px] leading-[21px]">8:58 AM<br />5/28/2019</time>
        <span className="h-full w-[6px] border-l border-[#8c7c66]" />
      </div>
    </footer>
  );
}

export default function App() {
  return (
    <div className="flex h-screen min-w-[1024px] flex-col overflow-hidden bg-white">
      <Browser />
      <Page />
      <Taskbar />
    </div>
  );
}
